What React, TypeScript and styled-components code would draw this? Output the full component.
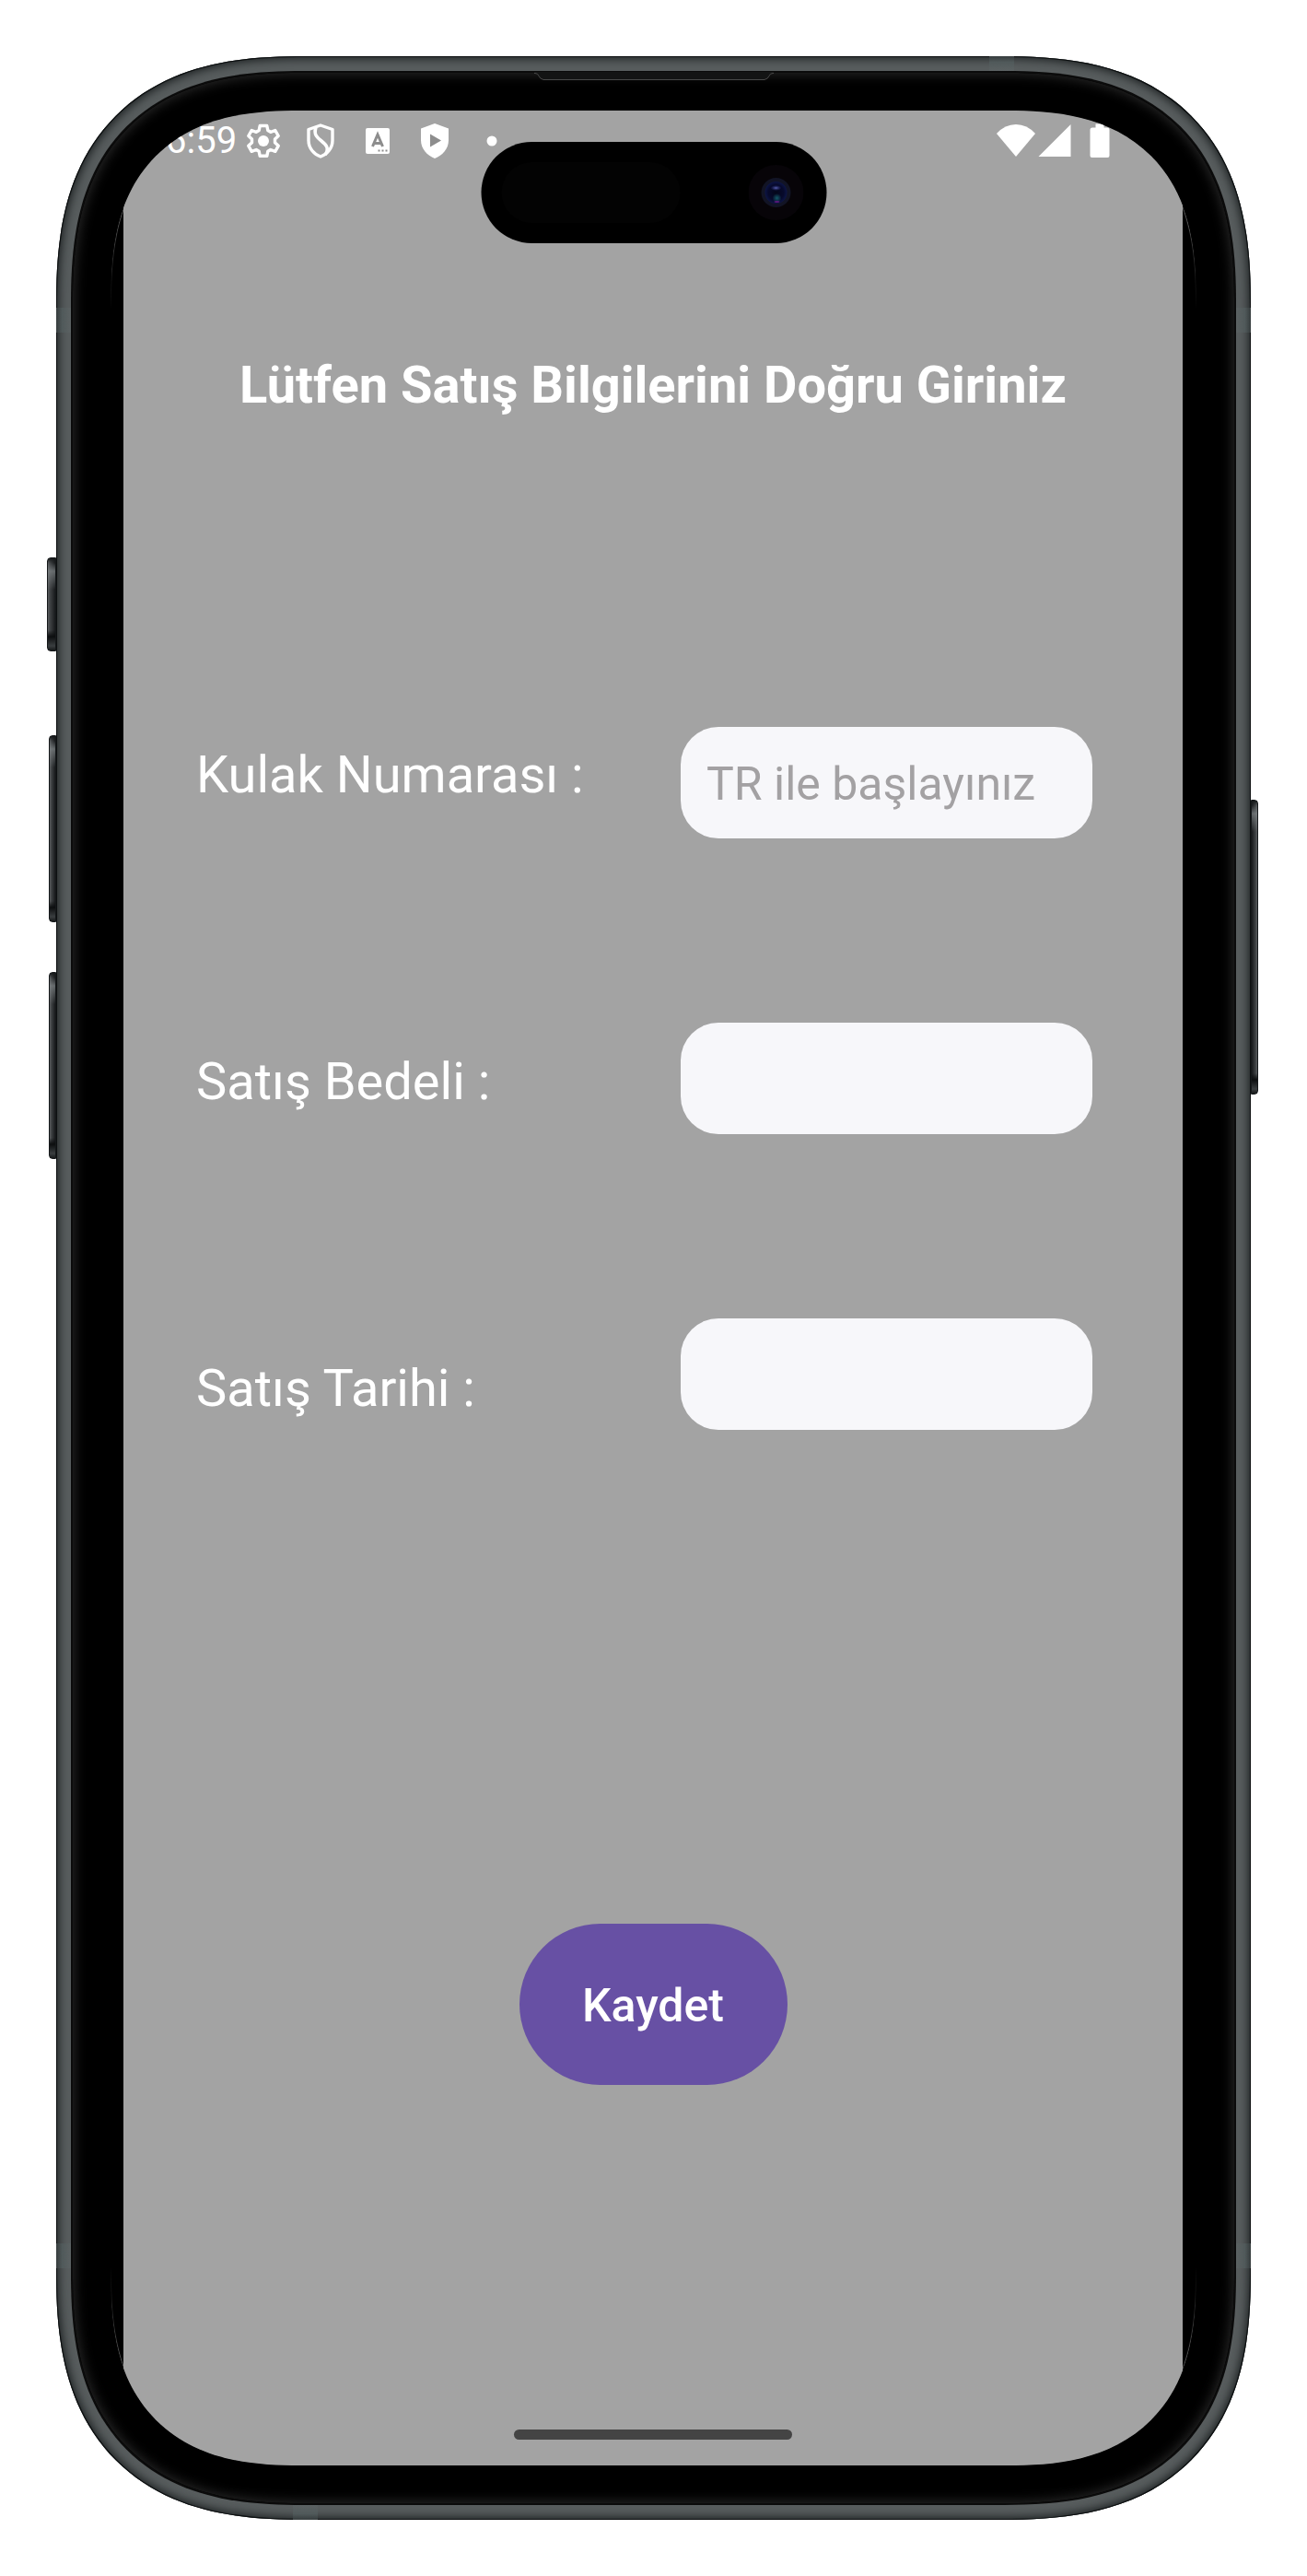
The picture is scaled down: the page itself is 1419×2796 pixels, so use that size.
import React from 'react';
import styled, { createGlobalStyle, css } from 'styled-components';

const GlobalStyle = createGlobalStyle`
  *, *::before, *::after { box-sizing: border-box; }
  body {
    margin: 0;
    background: #ffffff;
    font-family: Roboto, "Noto Sans", sans-serif;
  }
`;

const smoothCorner = (round: number, smooth: number) => css`
  border-radius: ${round}px;
  @supports (corner-shape: superellipse(1.34)) {
    border-radius: ${smooth}px;
    corner-shape: superellipse(1.34);
  }
`;

const Page = styled.div`
  display: flex;
  justify-content: center;
  padding: 61px 61px 62px;
`;

const Phone = styled.div`
  position: relative;
  flex: 1;
  max-width: 1297px;
  padding: 16px;
  background: #585d5e;
  box-shadow:
    inset 0 0 0 1px #0d1011,
    inset 0 0 11px 2px #141819;
  ${smoothCorner(221, 270)}
`;

const SideKey = styled.span<{ $side: 'left' | 'right'; $top: number; $length: number; $depth: number }>`
  position: absolute;
  ${(p) => p.$side}: -${(p) => p.$depth}px;
  top: ${(p) => p.$top}px;
  width: ${(p) => p.$depth}px;
  height: ${(p) => p.$length}px;
  border: 1px solid #15181a;
  border-radius: ${(p) => (p.$side === 'left' ? '4px 0 0 4px' : '0 4px 4px 0')};
  background:
    linear-gradient(to bottom, #16191a 0, transparent 5px, rgba(130, 136, 138, 0.7) 14px, transparent 34px, transparent calc(100% - 22px), #0c0e0f calc(100% - 15px), #3a3e40 calc(100% - 5px), #16191a 100%),
    linear-gradient(to ${(p) => p.$side}, #17191b, #3f4244 70%, #5a5d5f);
`;

const AntennaBand = styled.span<{ $edge: 'left' | 'right' | 'top' | 'bottom'; $at: string }>`
  position: absolute;
  background: linear-gradient(
    to ${(p) => p.$edge},
    #5c6263,
    #50595a 60%,
    #363c3d
  );
  ${(p) =>
    p.$edge === 'left' || p.$edge === 'right'
      ? css`
          ${p.$edge}: 0;
          top: ${p.$at};
          width: 16px;
          height: 27px;
        `
      : css`
          ${p.$edge}: 0;
          left: ${p.$at};
          width: 27px;
          height: 16px;
        `}
`;

const Bezel = styled.div`
  position: relative;
  padding: 41px;
  border: 2px solid #0b0b0b;
  background: #000000;
  box-shadow: inset 0 0 14px 1px #2c2c2c;
  ${smoothCorner(205, 252)}
`;

const Earpiece = styled.svg`
  position: absolute;
  top: -1px;
  left: 50%;
  width: 260px;
  height: 10px;
  transform: translateX(-50%);
`;

const Display = styled.div`
  position: relative;
  overflow: hidden;
  padding: 0 15px 0 14px;
  background: #000000;
  ${smoothCorner(167, 206)}

  &::before {
    content: '';
    position: absolute;
    inset: 0;
    border-radius: inherit;
    corner-shape: inherit;
    box-shadow: inset 0 0 0 1px rgba(255, 255, 255, 0.3);
    mask-image: linear-gradient(to bottom, #000 120px, transparent 215px, transparent calc(100% - 215px), #000 calc(100% - 120px));
  }
`;

const Screen = styled.main`
  position: relative;
  display: flex;
  flex-direction: column;
  align-items: stretch;
  background: #a3a3a3;
  color: #ffffff;
`;

const StatusBar = styled.header`
  display: flex;
  align-items: center;
  justify-content: space-between;
  height: 66px;
  padding: 0 79px 0 46px;
`;

const StatusGroup = styled.div`
  display: flex;
  align-items: center;
`;

const Clock = styled.time`
  width: 88px;
  font-size: 40px;
  line-height: 48px;
`;

const StatusIcon = styled.svg<{ $w: number; $gap: number }>`
  display: block;
  width: ${(p) => p.$w}px;
  height: 40px;
  margin-left: ${(p) => p.$gap}px;
`;

const Island = styled.div`
  position: absolute;
  top: 34px;
  left: 50%;
  display: flex;
  align-items: center;
  justify-content: space-between;
  width: 375px;
  height: 110px;
  padding: 0 25px 0 22px;
  border-radius: 55px;
  background: #000000;
  transform: translateX(-50%);
`;

const Sensor = styled.span`
  width: 194px;
  height: 66px;
  border-radius: 33px;
  background: #030303;
`;

const Camera = styled.svg`
  width: 60px;
  height: 60px;
`;

const Title = styled.h1`
  margin: 200px 0 0;
  font-size: 56px;
  font-weight: 700;
  line-height: 64px;
  text-align: center;
`;

const Form = styled.form`
  display: flex;
  flex-direction: column;
  align-items: center;
  margin-top: 339px;
`;

const Fields = styled.div`
  display: flex;
  justify-content: space-between;
  align-items: flex-start;
  width: 100%;
  padding: 0 98px 0 79px;
`;

const Labels = styled.div`
  display: grid;
  gap: 269px;
  padding-top: 20px;
`;

const Label = styled.label`
  font-size: 56px;
  line-height: 64px;
  white-space: nowrap;
`;

const Inputs = styled.div`
  display: grid;
  gap: 200px;
`;

const TextField = styled.input`
  width: 447px;
  height: 121px;
  padding: 2px 28px 0;
  border: 0;
  border-radius: 41px;
  outline: 0;
  background: #f7f7fa;
  color: #333333;
  font-family: inherit;
  font-size: 50px;
  line-height: 60px;

  &::placeholder {
    color: #a3a1a3;
    opacity: 1;
  }
`;

const SaveButton = styled.button`
  width: 291px;
  height: 175px;
  margin-top: 536px;
  padding: 2px 0 0;
  border: 0;
  border-radius: 88px;
  background: #6750a4;
  color: #ffffff;
  font-family: inherit;
  font-size: 50px;
  font-weight: 500;
  line-height: 60px;
  cursor: pointer;
`;

const HomeIndicator = styled.div`
  align-self: center;
  width: 302px;
  height: 11px;
  margin: 374px 0 28px;
  border-radius: 6px;
  background: #444444;
`;

const fields = [
  { id: 'kulak', label: 'Kulak Numarası :', placeholder: 'TR ile başlayınız' },
  { id: 'bedel', label: 'Satış Bedeli :', placeholder: '' },
  { id: 'tarih', label: 'Satış Tarihi :', placeholder: '' },
];

const StatusIcons = () => (
  <>
    <StatusIcon $w={36} $gap={0} viewBox="0 0 36 40" aria-hidden="true">
      <path
        d="M14.2 3.5h7.6l1 5 3 1.800 5-1.800 3.400 6-3.700 3.500v3.800l3.700 3.500-3.400 6-5-1.800-3 1.800-1 5h-7.600l-1-5-3-1.800-5 1.800-3.400-6 3.700-3.500v-3.800l-3.700-3.500 3.400-6 5 1.800 3-1.800z"
        fill="none"
        stroke="#fff"
        strokeWidth="3.400"
        strokeLinejoin="round"
      />
      <circle cx="18" cy="20" r="6" fill="#fff" />
    </StatusIcon>
    <StatusIcon $w={32} $gap={28} viewBox="0 0 32 40" aria-hidden="true">
      <path d="M16 3 29 7.500v12C29 28 23 34.500 16 37 9 34.500 3 28 3 19.500v-12z" fill="none" stroke="#fff" strokeWidth="3.400" strokeLinejoin="round" />
      <path d="M11 5.500C8 13 13 17 17 20c5 4 9 8 4 15" fill="none" stroke="#fff" strokeWidth="3.600" />
    </StatusIcon>
    <StatusIcon $w={26} $gap={33} viewBox="0 0 26 40" aria-hidden="true">
      <rect y="6" width="26" height="28" rx="2" fill="#fff" />
      <path d="m7.500 26 5.500-13 5.500 13M9.500 22.500h7" fill="none" stroke="#8d8d8d" strokeWidth="3" />
      <path d="M13.500 30.500h2m2 0h2m2 0h2" stroke="#8d8d8d" strokeWidth="2" />
    </StatusIcon>
    <StatusIcon $w={32} $gap={33} viewBox="0 0 32 40" aria-hidden="true">
      <path d="M16 1 31 6.500V19c0 9.500-6.500 16.500-15 20C7.500 35.500 1 28.500 1 19V6.500z" fill="#fff" />
      <path d="M11 12.500v14L23 19.500z" fill="#8d8d8d" />
    </StatusIcon>
    <StatusIcon $w={12} $gap={40} viewBox="0 0 12 40" aria-hidden="true">
      <circle cx="6" cy="20" r="5.500" fill="#fff" />
    </StatusIcon>
  </>
);

const RadioIcons = () => (
  <>
    <StatusIcon $w={42} $gap={0} viewBox="0 0 42 40" aria-hidden="true">
      <path d="M0 12Q9 2 21 2t21 10L21 37z" fill="#fff" />
    </StatusIcon>
    <StatusIcon $w={36} $gap={3} viewBox="0 0 36 40" aria-hidden="true">
      <path d="M35.500 2v35H.5z" fill="#fff" />
    </StatusIcon>
    <StatusIcon $w={22} $gap={20} viewBox="0 0 22 40" aria-hidden="true">
      <path d="M6.500 1.500h9v4H19a2.500 2.500 0 0 1 2.500 2.500v28a2 2 0 0 1-2 2h-17a2 2 0 0 1-2-2V8A2.500 2.500 0 0 1 3 5.500h3.500z" fill="#fff" />
    </StatusIcon>
  </>
);

export default function App() {
  return (
    <>
      <GlobalStyle />
      <Page>
        <Phone>
          <SideKey $side="left" $top={544} $length={102} $depth={10} />
          <SideKey $side="left" $top={737} $length={203} $depth={8} />
          <SideKey $side="left" $top={994} $length={203} $depth={8} />
          <SideKey $side="right" $top={807} $length={320} $depth={8} />
          <AntennaBand $edge="left" $at="273px" />
          <AntennaBand $edge="right" $at="273px" />
          <AntennaBand $edge="left" $at="calc(100% - 300px)" />
          <AntennaBand $edge="right" $at="calc(100% - 300px)" />
          <AntennaBand $edge="top" $at="calc(100% - 284px)" />
          <AntennaBand $edge="bottom" $at="257px" />
          <Bezel>
            <Earpiece viewBox="0 0 260 10" aria-hidden="true">
              <path d="M0 0h260v1.500h-1q-3 0-4 3t-5 4H10q-4-1-5-4t-4-3H0z" fill="#131414" />
              <path d="M0 1.500h1q3 0 4 3t5 4h240q4-1 5-4t4-3h1" fill="none" stroke="#484848" />
            </Earpiece>
            <Display>
              <Screen>
                <StatusBar>
                  <StatusGroup>
                    <Clock>6:59</Clock>
                    <StatusIcons />
                  </StatusGroup>
                  <StatusGroup>
                    <RadioIcons />
                  </StatusGroup>
                </StatusBar>
                <Title>Lütfen Satış Bilgilerini Doğru Giriniz</Title>
                <Form onSubmit={(event) => event.preventDefault()}>
                  <Fields>
                    <Labels>
                      {fields.map((field) => (
                        <Label key={field.id} htmlFor={field.id}>
                          {field.label}
                        </Label>
                      ))}
                    </Labels>
                    <Inputs>
                      {fields.map((field) => (
                        <TextField key={field.id} id={field.id} type="text" placeholder={field.placeholder} />
                      ))}
                    </Inputs>
                  </Fields>
                  <SaveButton type="submit">Kaydet</SaveButton>
                </Form>
                <HomeIndicator />
              </Screen>
              <Island>
                <Sensor />
                <Camera viewBox="0 0 60 60" aria-hidden="true">
                  <defs>
                    <radialGradient id="lens" cx="50%" cy="50%" r="50%">
                      <stop offset="0" stopColor="#04061a" />
                      <stop offset="0.700" stopColor="#070a2c" />
                      <stop offset="1" stopColor="#0d1546" />
                    </radialGradient>
                    <radialGradient id="glow">
                      <stop offset="0" stopColor="#145a68" />
                      <stop offset="1" stopColor="#145a68" stopOpacity="0" />
                    </radialGradient>
                    <radialGradient id="shine">
                      <stop offset="0" stopColor="#5a62b0" />
                      <stop offset="1" stopColor="#2a3080" stopOpacity="0" />
                    </radialGradient>
                  </defs>
                  <circle cx="30" cy="30" r="30" fill="#070408" />
                  <circle cx="30" cy="30" r="16" fill="#121425" />
                  <circle cx="30" cy="30" r="12" fill="url(#lens)" />
                  <ellipse cx="30" cy="25" rx="6" ry="3" fill="url(#shine)" />
                  <circle cx="31" cy="36" r="5" fill="url(#glow)" />
                  <ellipse cx="31" cy="40" rx="3" ry="1" fill="#5a1878" />
                </Camera>
              </Island>
            </Display>
          </Bezel>
        </Phone>
      </Page>
    </>
  );
}
